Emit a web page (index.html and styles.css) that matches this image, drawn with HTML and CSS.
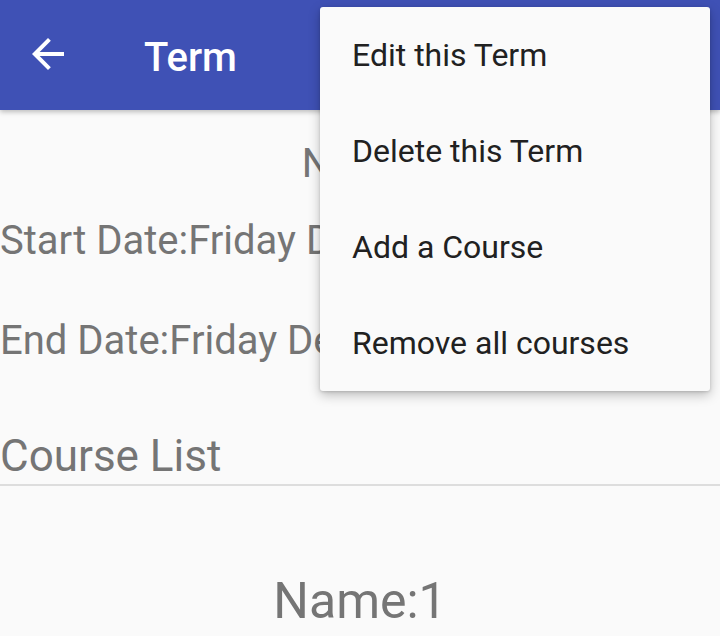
FILE: index.html
```html
<!DOCTYPE html>
<html>
<head>
<meta charset="utf-8">
<link rel="stylesheet" href="styles.css">
</head>
<body>
<header class="appbar">
  <svg class="back" width="48" height="48" viewBox="0 0 24 24"><path d="M20 11H7.83l5.59-5.59L12 4l-8 8 8 8 1.41-1.41L7.83 13H20v-2z" fill="#fff"/></svg>
  <h1 class="title">Term</h1>
</header>
<main class="content">
  <div class="name">Name:1</div>
  <div class="date start">Start Date:Friday December 1 2017</div>
  <div class="date end">End Date:Friday December 1 2017</div>
  <div class="section">Course List</div>
  <div class="course">Name:1</div>
</main>
<ul class="menu">
  <li>Edit this Term</li>
  <li>Delete this Term</li>
  <li>Add a Course</li>
  <li>Remove all courses</li>
</ul>
</body>
</html>
```
FILE: styles.css
```css
html, body { margin: 0; padding: 0; }
body {
  width: 720px;
  height: 636px;
  overflow: hidden;
  background: #fafafa;
  font-family: Roboto, "Noto Sans", sans-serif;
  position: relative;
}
.appbar {
  height: 110px;
  background: #3f51b5;
  display: flex;
  align-items: center;
  box-shadow: 0 2px 5px rgba(0,0,0,0.25);
  position: relative;
  z-index: 1;
}
.back { margin-left: 24px; margin-top: -2px; }
.title {
  margin: 4px 0 0 72px;
  color: #fff;
  font-size: 40px;
  font-weight: 500;
}
.content {
  color: #757575;
  white-space: nowrap;
  overflow: hidden;
}
.name {
  text-align: center;
  font-size: 40px;
  margin-top: 32px;
  padding-left: 22px;
  line-height: 44px;
}
.date {
  font-size: 40px;
  line-height: 44px;
}
.start { margin-top: 33px; }
.end { margin-top: 56px; }
.section {
  margin-top: 69px;
  font-size: 44px;
  line-height: 48px;
  padding-bottom: 4px;
  border-bottom: 2px solid #dddddd;
}
.course {
  text-align: center;
  margin-top: 87px;
  font-size: 50px;
  line-height: 56px;
}
.menu {
  position: absolute;
  left: 320px;
  top: 7px;
  width: 390px;
  margin: 0;
  padding: 0;
  list-style: none;
  background: #fafafa;
  border-radius: 3px;
  box-shadow: 0 4px 12px rgba(0,0,0,0.25), 0 1px 3px rgba(0,0,0,0.15);
  z-index: 2;
}
.menu li {
  height: 96px;
  line-height: 96px;
  padding-left: 32px;
  font-size: 32px;
  color: #212121;
}
```
